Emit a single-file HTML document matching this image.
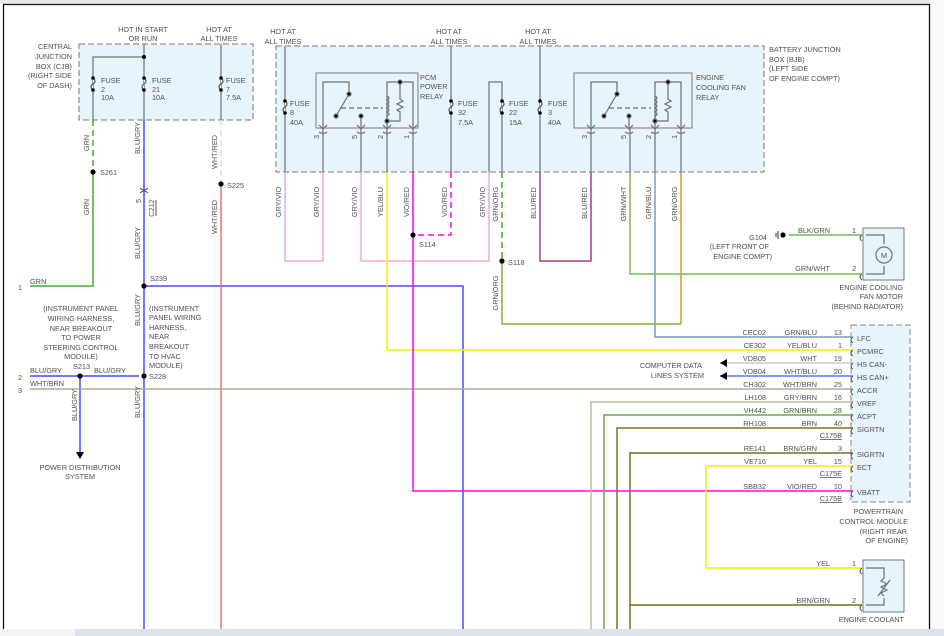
<!DOCTYPE html><html><head><meta charset="utf-8"><style>
html,body{margin:0;padding:0;background:#fff;width:944px;height:636px;overflow:hidden}
svg{display:block}
text{font-family:"Liberation Sans",sans-serif;font-size:7.3px;fill:#505050}
.g{stroke:#707070;stroke-width:1.2;fill:none}
.d{fill:#000}
</style></head><body>
<svg width="944" height="636" viewBox="0 0 944 636">
<rect x="0" y="0" width="944" height="4" fill="#e8e8e8"/>
<rect x="930" y="0" width="14" height="636" fill="#fafafa"/>
<path d="M3.5 636V4.5H929.5V636" stroke="#111" stroke-width="1.3" fill="none"/>
<!-- boxes -->
<rect x="79" y="44" width="174" height="76" fill="#e8f4fc" stroke="#777" stroke-dasharray="6,3"/>
<rect x="276" y="46" width="488" height="126" fill="#e8f4fc" stroke="#777" stroke-dasharray="6,3"/>
<rect x="851" y="325" width="59" height="177" fill="#e8f4fc" stroke="#888" stroke-dasharray="6,3"/>
<rect x="863" y="228" width="41" height="52" fill="#e8f4fc" stroke="#777"/>
<rect x="863" y="560" width="41" height="52" fill="#e8f4fc" stroke="#777"/>
<rect x="316" y="73" width="102" height="55" fill="none" stroke="#777"/>
<rect x="574" y="73" width="118" height="55" fill="none" stroke="#777"/>
<!-- relay internals -->
<g id="rl" class="g">
<path d="M323 128V82H349V94"/><path d="M349 94L336 116"/><path d="M341 108H383" stroke-dasharray="5,3"/>
<path d="M361 116V128"/><path d="M387 128V82H413V128"/><path d="M387 96q4 2 0 4q4 2 0 4q4 2 0 4q4 2 0 4q4 2 0 4V121H400V112l-3-2 6-3-6-3 6-3-3-2V82"/>
<circle cx="349" cy="94" r="2" class="d"/><circle cx="336" cy="116" r="2" class="d"/><circle cx="361" cy="116" r="2" class="d"/><circle cx="387" cy="121" r="2" class="d"/><circle cx="400" cy="82" r="2" class="d"/>
<path d="M319 125l4 4 4-4M357 125l4 4 4-4M383 125l4 4 4-4M409 125l4 4 4-4"/>
<path d="M319 132q4 3 8 0M357 132q4 3 8 0M383 132q4 3 8 0M409 132q4 3 8 0"/>
</g>
<use href="#rl" x="268"/>
<!-- gray wires -->
<path class="g" d="M93 120V57H144M144 44V120M221 44V120M285 46V172M323 128V172M361 128V172M387 128V172M413 128V172M451 46V172M489 172V82H502V172M540 46V172M591 128V172M630 128V172M655 128V172M681 128V172"/>
<!-- fuses -->
<g fill="#fff" stroke="#555" stroke-width="1.2">
<path d="M93 78q4 3 0 6q-4 3 0 6M144 78q4 3 0 6q-4 3 0 6M221 78q4 3 0 6q-4 3 0 6M285 101q4 3 0 6q-4 3 0 6M451 101q4 3 0 6q-4 3 0 6M502 101q4 3 0 6q-4 3 0 6M540 101q4 3 0 6q-4 3 0 6"/>
</g>
<g class="d"><circle cx="144" cy="57" r="2"/>
<circle cx="93" cy="78" r="1.8"/><circle cx="93" cy="90" r="1.8"/><circle cx="144" cy="78" r="1.8"/><circle cx="144" cy="90" r="1.8"/><circle cx="221" cy="78" r="1.8"/><circle cx="221" cy="90" r="1.8"/>
<circle cx="285" cy="101" r="1.8"/><circle cx="285" cy="113" r="1.8"/><circle cx="451" cy="101" r="1.8"/><circle cx="451" cy="113" r="1.8"/><circle cx="502" cy="101" r="1.8"/><circle cx="502" cy="113" r="1.8"/><circle cx="540" cy="101" r="1.8"/><circle cx="540" cy="113" r="1.8"/></g>
<!-- colored wires -->
<g fill="none" stroke-width="1.5">
<path d="M93 120V172" stroke="#40b020" stroke-dasharray="6,4"/>
<path d="M93 172V286H30" stroke="#40b020"/>
<path d="M144 120V636M144 286H463V636M30 376H139M80 376V452" stroke="#4848ff"/>
<path d="M221 120V184" stroke="#ddd" stroke-dasharray="6,4"/>
<path d="M221 184V636" stroke="#f07070"/>
<path d="M30 389H853" stroke="#b8a890"/>
<path d="M285 172V261H323V172M361 172V261H489V172" stroke="#f0a8e0"/>
<path d="M387 172V350H853" stroke="#f0f000"/>
<path d="M413 172V491H853" stroke="#ff00ff"/>
<path d="M451 172V235H413" stroke="#ff00ff" stroke-dasharray="6,4"/>
<path d="M502 172V261" stroke="#40b020" stroke-dasharray="6,4"/>
<path d="M502 261V324H681" stroke="#80b040"/>
<path d="M681 172V324" stroke="#e89030"/>
<path d="M540 172V261H591V172" stroke="#a04080"/>
<path d="M630 172V274H862M789 235H862" stroke="#70c050"/>
<path d="M655 172V337H853" stroke="#70a0c0"/>
<path d="M720 363H853" stroke="#ccc"/>
<path d="M720 376H853" stroke="#6a6aff"/>
<path d="M591 636V402H853" stroke="#c0b8a0"/>
<path d="M604 636V415H853" stroke="#60b040"/>
<path d="M617 636V428H853" stroke="#807020"/>
<path d="M630 636V453H853M630 605H862" stroke="#707020"/>
<path d="M706 466H853M706 466V568H862" stroke="#f0f000"/>
</g>
<g class="d"><circle cx="93" cy="172" r="2.6"/><circle cx="221" cy="184" r="2.6"/><circle cx="144" cy="286" r="2.6"/><circle cx="144" cy="376" r="2.6"/><circle cx="80" cy="376" r="2.6"/><circle cx="413" cy="235" r="2.6"/><circle cx="502" cy="261" r="2.6"/><circle cx="783" cy="235" r="2.6"/>
<path d="M76 452h8l-4 7zM720 363l7-4v8zM720 376l7-4v8z"/></g>
<path d="M778 231v8M776 233v4" stroke="#333"/>
<path d="M140 188q4 4 8 0M140 193q4 -4 8 0" stroke="#555" fill="none"/>
<path d="M156 200v16" stroke="#555"/>
<!-- motor & sensor -->
<g class="g"><path d="M866 235H884V244M884 266V274H866"/><circle cx="884" cy="255" r="8"/><path d="M866 568H884V578M884 598V605H866M884 578l-3 3 6 3-6 3 6 3-6 3 3 3M878 596l12-16"/></g>
<text x="884" y="258" text-anchor="middle" font-size="8">M</text>
<g fill="none" stroke="#555"><path d="M862 235q-4 3 0 6M862 274q-4 3 0 6M862 568q-4 3 0 6M862 605q-4 3 0 6"/>
<path d="M853 337q-4 3 0 6M853 350q-4 3 0 6M853 363q-4 3 0 6M853 376q-4 3 0 6M853 389q-4 3 0 6M853 402q-4 3 0 6M853 415q-4 3 0 6M853 428q-4 3 0 6M853 453q-4 3 0 6M853 466q-4 3 0 6M853 491q-4 3 0 6"/></g>
<!-- texts -->
<g text-anchor="middle"><text x="143" y="32">HOT IN START</text><text x="143" y="41">OR RUN</text>
<text x="219" y="32">HOT AT</text><text x="219" y="41">ALL TIMES</text>
<text x="283" y="34">HOT AT</text><text x="283" y="44">ALL TIMES</text>
<text x="449" y="34">HOT AT</text><text x="449" y="44">ALL TIMES</text>
<text x="538" y="34">HOT AT</text><text x="538" y="44">ALL TIMES</text>
<text x="80" y="470">POWER DISTRIBUTION</text><text x="80" y="479">SYSTEM</text>
<text x="81" y="311">(INSTRUMENT PANEL</text><text x="81" y="321">WIRING HARNESS,</text><text x="81" y="331">NEAR BREAKOUT</text><text x="81" y="340">TO POWER</text><text x="81" y="350">STEERING CONTROL</text><text x="81" y="359">MODULE)</text></g>
<g text-anchor="end"><text x="72" y="49">CENTRAL</text><text x="72" y="59">JUNCTION</text><text x="72" y="69">BOX (CJB)</text><text x="72" y="78">(RIGHT SIDE</text><text x="72" y="88">OF DASH)</text>
<text x="767" y="240">G104</text><text x="769" y="249">(LEFT FRONT OF</text><text x="772" y="259">ENGINE COMPT)</text>
<text x="903" y="290">ENGINE COOLING</text><text x="903" y="299">FAN MOTOR</text><text x="903" y="309">(BEHIND RADIATOR)</text>
<text x="903" y="514">POWERTRAIN</text><text x="908" y="524">CONTROL MODULE</text><text x="907" y="534">(RIGHT REAR</text><text x="908" y="543">OF ENGINE)</text>
<text x="904" y="622">ENGINE COOLANT</text>
<text x="702" y="368">COMPUTER DATA</text><text x="704" y="378">LINES SYSTEM</text>
<text x="766" y="335">CEC02</text><text x="766" y="348">CE302</text><text x="766" y="361">VDB05</text><text x="766" y="374">VDB04</text><text x="766" y="387">CH302</text><text x="766" y="400">LH108</text><text x="766" y="413">VH442</text><text x="766" y="426">RH108</text><text x="766" y="451">RE141</text><text x="766" y="464">VE716</text><text x="766" y="489">SBB32</text>
<text x="817" y="335">GRN/BLU</text><text x="817" y="348">YEL/BLU</text><text x="817" y="361">WHT</text><text x="817" y="374">WHT/BLU</text><text x="817" y="387">WHT/BRN</text><text x="817" y="400">GRY/BRN</text><text x="817" y="413">GRN/BRN</text><text x="817" y="426">BRN</text><text x="817" y="451">BRN/GRN</text><text x="817" y="464">YEL</text><text x="817" y="489">VIO/RED</text>
<text x="842" y="335">13</text><text x="842" y="348">1</text><text x="842" y="361">19</text><text x="842" y="374">20</text><text x="842" y="387">25</text><text x="842" y="400">16</text><text x="842" y="413">28</text><text x="842" y="426">40</text><text x="842" y="451">3</text><text x="842" y="464">15</text><text x="842" y="489">10</text>
<text x="842" y="438">C175B</text><text x="842" y="476">C175E</text><text x="842" y="501">C175B</text>
<text x="830" y="233">BLK/GRN</text><text x="830" y="271">GRN/WHT</text><text x="830" y="566">YEL</text><text x="830" y="603">BRN/GRN</text>
<text x="856" y="233">1</text><text x="856" y="271">2</text><text x="856" y="566">1</text><text x="856" y="603">2</text></g>
<g fill="#555"><rect x="820" y="439" width="22" height="0.8"/><rect x="820" y="477" width="22" height="0.8"/><rect x="820" y="502" width="22" height="0.8"/></g>
<text x="857" y="341">LFC</text><text x="857" y="354">PCMRC</text><text x="857" y="367">HS CAN-</text><text x="857" y="380">HS CAN+</text><text x="857" y="393">ACCR</text><text x="857" y="406">VREF</text><text x="857" y="419">ACPT</text><text x="857" y="432">SIGRTN</text><text x="857" y="457">SIGRTN</text><text x="857" y="470">ECT</text><text x="857" y="495">VBATT</text>
<text x="101" y="83">FUSE</text><text x="101" y="92">2</text><text x="101" y="100">10A</text>
<text x="152" y="83">FUSE</text><text x="152" y="92">21</text><text x="152" y="100">10A</text>
<text x="226" y="83">FUSE</text><text x="226" y="92">7</text><text x="226" y="100">7.5A</text>
<text x="290" y="106">FUSE</text><text x="290" y="115">8</text><text x="290" y="125">40A</text>
<text x="458" y="106">FUSE</text><text x="458" y="115">32</text><text x="458" y="125">7.5A</text>
<text x="509" y="106">FUSE</text><text x="509" y="115">22</text><text x="509" y="125">15A</text>
<text x="548" y="106">FUSE</text><text x="548" y="115">3</text><text x="548" y="125">40A</text>
<text x="420" y="80">PCM</text><text x="420" y="89">POWER</text><text x="420" y="99">RELAY</text>
<text x="696" y="80">ENGINE</text><text x="696" y="90">COOLING FAN</text><text x="696" y="100">RELAY</text>
<text x="769" y="52">BATTERY JUNCTION</text><text x="769" y="62">BOX (BJB)</text><text x="769" y="71">(LEFT SIDE</text><text x="769" y="81">OF ENGINE COMPT)</text>
<text x="100" y="175">S261</text><text x="227" y="188">S225</text><text x="150" y="281">S239</text><text x="419" y="247">S114</text><text x="508" y="265">S118</text><text x="73" y="369">S213</text><text x="149" y="379">S228</text>
<text x="30" y="284">GRN</text><text x="30" y="373">BLU/GRY</text><text x="94" y="373">BLU/GRY</text><text x="30" y="386">WHT/BRN</text>
<text x="18" y="290">1</text><text x="18" y="380">2</text><text x="18" y="393">3</text>
<text x="149" y="311">(INSTRUMENT</text><text x="149" y="320">PANEL WIRING</text><text x="149" y="330">HARNESS,</text><text x="149" y="339">NEAR</text><text x="149" y="349">BREAKOUT</text><text x="149" y="359">TO HVAC</text><text x="149" y="368">MODULE)</text>
<g text-anchor="middle">
<text transform="translate(89,143) rotate(-90)">GRN</text><text transform="translate(89,207) rotate(-90)">GRN</text>
<text transform="translate(140,138) rotate(-90)">BLU/GRY</text><text transform="translate(140,243) rotate(-90)">BLU/GRY</text><text transform="translate(140,310) rotate(-90)">BLU/GRY</text><text transform="translate(140,402) rotate(-90)">BLU/GRY</text><text transform="translate(77,405) rotate(-90)">BLU/GRY</text>
<text transform="translate(217,152) rotate(-90)">WHT/RED</text><text transform="translate(217,217) rotate(-90)">WHT/RED</text>
<text transform="translate(281,202) rotate(-90)">GRY/VIO</text><text transform="translate(319,202) rotate(-90)">GRY/VIO</text><text transform="translate(357,202) rotate(-90)">GRY/VIO</text><text transform="translate(383,202) rotate(-90)">YEL/BLU</text><text transform="translate(409,202) rotate(-90)">VIO/RED</text><text transform="translate(447,202) rotate(-90)">VIO/RED</text>
<text transform="translate(485,202) rotate(-90)">GRY/VIO</text><text transform="translate(498,204) rotate(-90)">GRN/ORG</text><text transform="translate(498,293) rotate(-90)">GRN/ORG</text>
<text transform="translate(536,203) rotate(-90)">BLU/RED</text><text transform="translate(587,203) rotate(-90)">BLU/RED</text><text transform="translate(626,204) rotate(-90)">GRN/WHT</text><text transform="translate(651,203) rotate(-90)">GRN/BLU</text><text transform="translate(677,204) rotate(-90)">GRN/ORG</text>
<text transform="translate(319,137) rotate(-90)">3</text><text transform="translate(357,137) rotate(-90)">5</text><text transform="translate(383,137) rotate(-90)">2</text><text transform="translate(409,137) rotate(-90)">1</text>
<text transform="translate(587,137) rotate(-90)">3</text><text transform="translate(626,137) rotate(-90)">5</text><text transform="translate(651,137) rotate(-90)">2</text><text transform="translate(677,137) rotate(-90)">1</text>
<text transform="translate(141,201) rotate(-90)">5</text><text transform="translate(154,208) rotate(-90)">C212</text>
</g>
<rect x="0" y="629" width="944" height="7" fill="#dde3ea"/>
<rect x="0" y="629" width="75" height="7" fill="#f4f4f4"/>
</svg>
</body></html>
